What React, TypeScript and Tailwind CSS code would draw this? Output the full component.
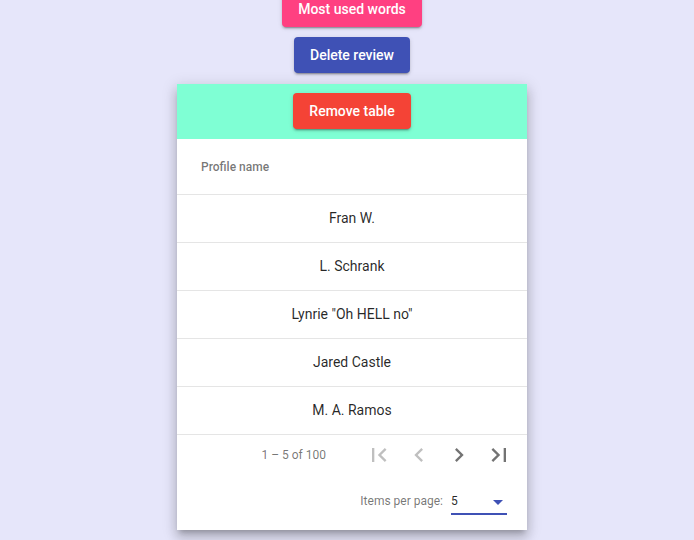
import React from 'react'

const names = ['Fran W.', 'L. Schrank', 'Lynrie "Oh HELL no"', 'Jared Castle', 'M. A. Ramos']

const raised =
    'h-9 px-4 rounded-[4px] text-white text-[14px] font-medium leading-9 shadow-[0_3px_1px_-2px_rgba(0,0,0,0.2),0_2px_2px_0_rgba(0,0,0,0.14),0_1px_5px_0_rgba(0,0,0,0.12)]'

// paginator icon paths (material)
const icons = {
    first: 'M18.41 16.59L13.82 12l4.59-4.59L17 6l-6 6 6 6zM6 6h2v12H6z',
    prev: 'M15.41 7.41L14 6l-6 6 6 6 1.41-1.41L10.83 12z',
    next: 'M10 6L8.59 7.41 13.17 12l-4.58 4.59L10 18l6-6z',
    last: 'M5.59 7.41L10.18 12l-4.59 4.59L7 18l6-6-6-6zM16 6h2v12h-2z',
}

function PageButton({ d, disabled }: { d: string; disabled?: boolean }) {
    return (
        <button className="w-10 h-10 flex items-center justify-center">
            <svg
                viewBox="0 0 24 24"
                className={'w-7 h-7 ' + (disabled ? 'fill-black/25' : 'fill-black/55')}
            >
                <path d={d} />
            </svg>
        </button>
    )
}

export default function App() {
    return (
        <div
            className="h-[540px] overflow-hidden flex flex-col bg-[#e6e6fa] pl-[10px]"
            style={{ fontFamily: 'Roboto, "Liberation Sans", sans-serif' }}
        >
            <div className="flex flex-col items-center -mt-[9px]">
                <button className={raised + ' bg-[#ff4081]'}>Most used words</button>
                <button className={raised + ' bg-[#3f51b5] mt-[10px]'}>Delete review</button>

                {/* table card */}
                <div className="w-[350px] mt-[11px] bg-white shadow-[0_5px_5px_-3px_rgba(0,0,0,0.2),0_8px_10px_1px_rgba(0,0,0,0.14),0_3px_14px_2px_rgba(0,0,0,0.12)]">
                    <div className="bg-[#7fffd4] flex justify-center pt-[9px] pb-[10px]">
                        <button className={raised + ' bg-[#f44336]'}>Remove table</button>
                    </div>

                    <div className="h-14 box-border border-b border-black/10 flex items-center pl-6 text-[12px] font-medium text-black/55">
                        Profile name
                    </div>

                    {names.map((n) => (
                        <div
                            key={n}
                            className="h-12 box-border border-b border-black/10 flex items-center justify-center text-[14px] text-black/85"
                        >
                            {n}
                        </div>
                    ))}

                    {/* paginator */}
                    <div className="h-10 flex items-center justify-end pr-2">
                        <span className="text-[12px] text-black/55 mr-[33px]">1 – 5 of 100</span>
                        <PageButton d={icons.first} disabled />
                        <PageButton d={icons.prev} disabled />
                        <PageButton d={icons.next} />
                        <PageButton d={icons.last} />
                    </div>
                    <div className="h-[55px] flex items-start justify-end pr-5 pt-[18px]">
                        <span className="text-[12px] leading-4 text-black/55 mr-2">Items per page:</span>
                        <div className="w-14 h-[22px] border-b-2 border-[#3f51b5] flex items-start justify-between">
                            <span className="text-[12px] leading-4 text-black/85">5</span>
                            <span className="mt-[7px] mr-[4px] w-0 h-0 border-l-[5px] border-r-[5px] border-t-[5px] border-l-transparent border-r-transparent border-t-[#3f51b5]" />
                        </div>
                    </div>
                </div>
            </div>
        </div>
    )
}
